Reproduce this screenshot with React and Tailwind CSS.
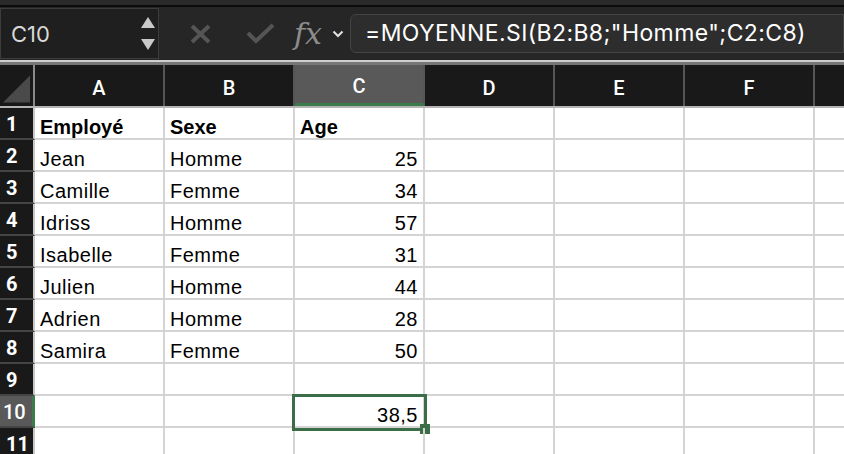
import React from 'react';

const cols = ['A', 'B', 'C', 'D', 'E', 'F', ''];

const rows = [
    { a: 'Employé', b: 'Sexe', c: 'Age', bold: true },
    { a: 'Jean', b: 'Homme', c: '25' },
    { a: 'Camille', b: 'Femme', c: '34' },
    { a: 'Idriss', b: 'Homme', c: '57' },
    { a: 'Isabelle', b: 'Femme', c: '31' },
    { a: 'Julien', b: 'Homme', c: '44' },
    { a: 'Adrien', b: 'Homme', c: '28' },
    { a: 'Samira', b: 'Femme', c: '50' },
    { a: '', b: '', c: '' },
    { a: '', b: '', c: '38,5', selected: true },
    { a: '', b: '', c: '' },
];

const cellFont = { fontFamily: '"Liberation Sans", Arial, sans-serif' };
const uiFont = { fontFamily: 'Roboto, "Liberation Sans", sans-serif' };
const barFont = { fontFamily: 'Inter, Roboto, sans-serif' };

const App = () => {
    return (
        <div className="w-[844px] h-[454px] overflow-hidden bg-white" style={uiFont}>
            {/* Top strip */}
            <div className="h-[5px] bg-[#2a2a2a]" />
            <div className="h-[2px] bg-[#0b0b0b]" />

            {/* Formula bar */}
            <div className="h-[53px] bg-[#262626] flex items-center">
                <div className="w-[159px] h-[51px] bg-[#1f1f1f] border border-[#3c3c3c] flex items-center justify-between pl-[10px] pr-[3px]">
                    <span className="text-[#d8d8d8] text-[22px] leading-none" style={barFont}>C10</span>
                    <div className="flex flex-col gap-[11px]">
                        <svg width="14" height="11" viewBox="0 0 14 11"><path d="M7 0 L14 11 L0 11 Z" fill="#c9c9c9" /></svg>
                        <svg width="14" height="11" viewBox="0 0 14 11"><path d="M0 0 L14 0 L7 11 Z" fill="#c9c9c9" /></svg>
                    </div>
                </div>
                <div className="ml-[31px] flex items-center">
                    <svg width="21" height="20" viewBox="0 0 21 20">
                        <path d="M2 2 L19 18 M19 2 L2 18" stroke="#555" strokeWidth="4" />
                    </svg>
                    <svg className="ml-[35px]" width="29" height="21" viewBox="0 0 29 21">
                        <path d="M2 10 L10 18 L27 2" stroke="#555" strokeWidth="4" fill="none" />
                    </svg>
                    <span className="ml-[19px] text-[#8c8c8c] text-[30px] italic leading-none" style={{ fontFamily: '"DejaVu Serif", "Liberation Serif", serif' }}>fx</span>
                    <svg className="ml-[10px]" width="12" height="8" viewBox="0 0 12 8">
                        <path d="M1.5 1.5 L6 6 L10.5 1.5" stroke="#e2e2e2" strokeWidth="2" fill="none" />
                    </svg>
                </div>
                <div className="ml-[6px] flex-1 h-[39px] bg-[#2d2d2d] border border-[#444] rounded-l-[6px] flex items-center pl-[14px]">
                    <span className="text-white text-[23px] tracking-[0.4px] leading-none whitespace-nowrap" style={barFont}>=MOYENNE.SI(B2:B8;"Homme";C2:C8)</span>
                </div>
            </div>

            {/* separator lines */}
            <div className="h-[2px] bg-[#cfcfcf]" />
            <div className="h-[3px] bg-[#777]" />

            {/* Column headers */}
            <div className="flex h-[43px] bg-[#191919] border-b-2 border-[#b4b4b4]">
                <div className="w-[35px] shrink-0 border-r-2 border-[#8a8a8a] relative flex items-end justify-end p-[3px]">
                    <svg width="28" height="28" viewBox="0 0 28 28"><path d="M28 0 L28 28 L0 28 Z" fill="#4a4a4a" /></svg>
                </div>
                {cols.map((c, i) => (
                    <div
                        key={i}
                        className={`w-[130px] shrink-0 flex items-center justify-center pt-[4px] text-[20px] font-medium text-white border-r-2 border-[#555] ${c === 'C' ? 'bg-[#595959] border-b-[3px] border-b-[#3b7a4b]' : ''}`}
                    >
                        {c}
                    </div>
                ))}
            </div>

            {/* Rows */}
            {rows.map((r, i) => (
                <div key={i} className="flex h-[32px]">
                    <div className={`w-[35px] shrink-0 flex items-end pb-[4px] leading-[20px] text-[20px] font-bold text-white border-b-2 border-[#444] ${r.selected ? 'bg-[#595959] border-r-[3px] border-r-[#3b7a4b] font-medium pl-[3px]' : 'bg-[#191919] border-r-2 border-r-[#c8c8c8] pl-[6px]'}`}>
                        {i + 1}
                    </div>
                    <div className={`w-[130px] shrink-0 flex items-end pb-[1px] px-[5px] leading-[20px] text-[20px] tracking-[0.5px] text-black border-r-2 border-b-2 border-[#d4d4d4] ${r.bold ? 'font-bold tracking-normal' : ''}`} style={cellFont}>
                        {r.a}
                    </div>
                    <div className={`w-[130px] shrink-0 flex items-end pb-[1px] px-[5px] leading-[20px] text-[20px] tracking-[0.5px] text-black border-r-2 border-b-2 border-[#d4d4d4] ${r.bold ? 'font-bold tracking-normal' : ''}`} style={cellFont}>
                        {r.b}
                    </div>
                    <div className={`relative w-[130px] shrink-0 flex items-end pb-[1px] px-[5px] leading-[20px] text-[20px] tracking-[0.5px] text-black border-r-2 border-b-2 border-[#d4d4d4] ${r.bold ? 'font-bold tracking-normal justify-start' : 'justify-end'}`} style={cellFont}>
                        {r.c}
                        {r.selected && (
                            <>
                                <div className="absolute -left-[3px] -top-[2px] w-[135px] h-[37px] border-[3px] border-[#3b6e47]" />
                                <div className="absolute left-[125px] top-[28px] w-[10px] h-[10px] bg-[#3b6e47]" />
                            </>
                        )}
                    </div>
                    {[0, 1, 2, 3].map(k => (
                        <div key={k} className="w-[130px] shrink-0 border-r-2 border-b-2 border-[#d4d4d4]" />
                    ))}
                </div>
            ))}
        </div>
    );
};

export default App;
